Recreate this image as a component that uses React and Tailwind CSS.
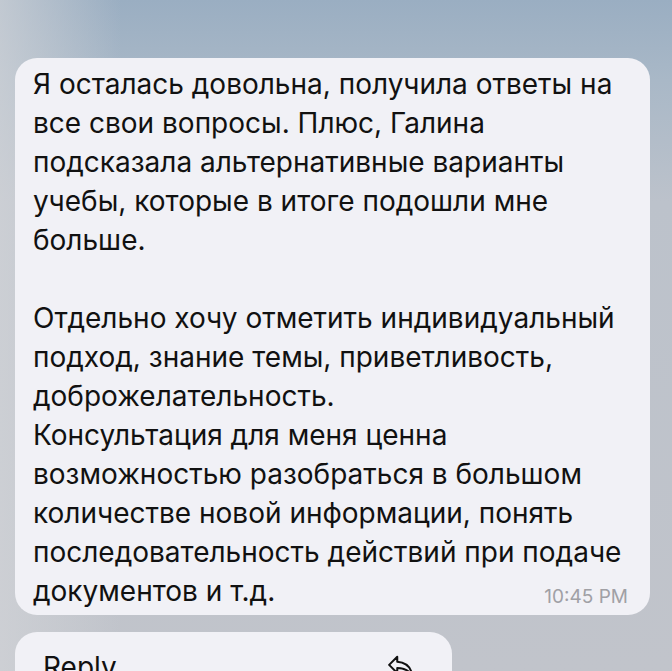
export default function App() {
  const p1 = [
    "Я осталась довольна, получила ответы на",
    "все свои вопросы. Плюс, Галина",
    "подсказала альтернативные варианты",
    "учебы, которые в итоге подошли мне",
    "больше.",
  ];
  const p2 = [
    "Отдельно хочу отметить индивидуальный",
    "подход, знание темы, приветливость,",
    "доброжелательность.",
    "Консультация для меня ценна",
    "возможностью разобраться в большом",
    "количестве новой информации, понять",
    "последовательность действий при подаче",
  ];
  return (
    <div
      className="w-[672px] h-[671px] overflow-hidden relative bg-[linear-gradient(180deg,#9aaec2_0%,#a9b8c7_12%,#bcc2cb_30%,#c1c4cb_100%)]"
      style={{ fontFamily: 'Inter, Roboto, "Noto Sans", sans-serif' }}
    >
      <div className="absolute inset-0 bg-[linear-gradient(90deg,rgba(210,212,216,0.7)_0%,rgba(210,212,216,0)_18%)]" />
      <div className="relative pt-[58px] pl-[15px] flex flex-col gap-[17px]">
        <div className="w-[635px] rounded-[22px] bg-[#f1f1f6] pl-[18px] pr-[22px] pt-[7px] pb-[4px] text-[28px] leading-[39px] text-[#111111]">
          {p1.map((l, i) => (
            <div key={i} className="whitespace-nowrap">{l}</div>
          ))}
          <div className="h-[39px]" />
          {p2.map((l, i) => (
            <div key={i} className="whitespace-nowrap">{l}</div>
          ))}
          <div className="flex items-end justify-between">
            <span className="whitespace-nowrap">документов и т.д.</span>
            <span className="text-[19px] leading-[24px] text-[#a0a0a5] mb-[2px]">10:45 PM</span>
          </div>
        </div>
        <div className="w-[437px] h-[80px] rounded-[22px] bg-[#f1f1f6] pl-[28px] pr-[36px] pt-[16px] flex justify-between items-start">
          <span className="text-[28px] leading-[39px] text-[#111111]">Reply</span>
          <svg width="30" height="30" viewBox="0 0 24 24" fill="none" stroke="#111" strokeWidth="1.6" strokeLinejoin="round" strokeLinecap="round" className="mt-[5px]">
            <path d="M9 3 L2.5 9.5 L9 16 V12 C14 12 18 13.5 21 18 C20 11.5 16 7.5 9 7 Z" />
          </svg>
        </div>
      </div>
    </div>
  );
}
